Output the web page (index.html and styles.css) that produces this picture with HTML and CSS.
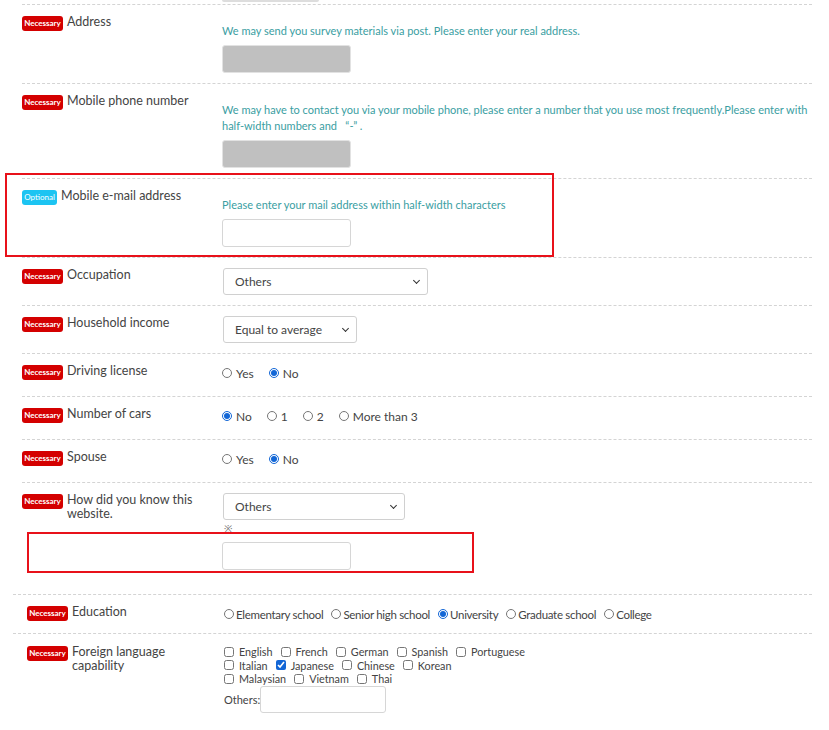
FILE: index.html
```html
<!DOCTYPE html>
<html lang="en">
<head>
    <meta charset="UTF-8">
    <meta name="viewport" content="width=device-width, initial-scale=1.0">
    <title>Member profile</title>
    <link rel="stylesheet" href="styles.css">
</head>
<body>
<div class="page">
    <div class="prev-input"></div>

    <div class="form">
        <div class="row">
            <div class="head"><span class="badge">Necessary</span><span class="name">Address</span></div>
            <div class="field">
                <p class="help">We may send you survey materials via post. Please enter your real address.</p>
                <input class="text masked" type="text">
            </div>
        </div>

        <div class="row">
            <div class="head"><span class="badge">Necessary</span><span class="name">Mobile phone number</span></div>
            <div class="field">
                <p class="help">We may have to contact you via your mobile phone, please enter a number that you use most frequently.Please enter with half-width numbers and &nbsp;&nbsp;“-” .</p>
                <input class="text masked" type="text">
            </div>
        </div>

        <div class="row">
            <div class="head"><span class="badge optional">Optional</span><span class="name">Mobile e-mail address</span></div>
            <div class="field">
                <p class="help">Please enter your mail address within half-width characters</p>
                <input class="text" type="text">
            </div>
        </div>

        <div class="row">
            <div class="head"><span class="badge">Necessary</span><span class="name">Occupation</span></div>
            <div class="field">
                <div class="select wide">
                    <select><option>Others</option></select>
                </div>
            </div>
        </div>

        <div class="row">
            <div class="head"><span class="badge">Necessary</span><span class="name">Household income</span></div>
            <div class="field">
                <div class="select mid">
                    <select><option>Equal to average</option></select>
                </div>
            </div>
        </div>

        <div class="row">
            <div class="head"><span class="badge">Necessary</span><span class="name">Driving license</span></div>
            <div class="field choices">
                <label><input type="radio" name="license">Yes</label>
                <label><input type="radio" name="license" checked>No</label>
            </div>
        </div>

        <div class="row">
            <div class="head"><span class="badge">Necessary</span><span class="name">Number of cars</span></div>
            <div class="field choices">
                <label><input type="radio" name="cars" checked>No</label>
                <label><input type="radio" name="cars">1</label>
                <label><input type="radio" name="cars">2</label>
                <label><input type="radio" name="cars">More than 3</label>
            </div>
        </div>

        <div class="row">
            <div class="head"><span class="badge">Necessary</span><span class="name">Spouse</span></div>
            <div class="field choices">
                <label><input type="radio" name="spouse">Yes</label>
                <label><input type="radio" name="spouse" checked>No</label>
            </div>
        </div>

        <div class="row">
            <div class="head"><span class="badge">Necessary</span><span class="name">How did you know this website.</span></div>
            <div class="field">
                <div class="select known">
                    <select><option>Others</option></select>
                </div>
                <div class="note">※</div>
                <input class="text" type="text">
            </div>
        </div>
    </div>

    <div class="form lower">
        <div class="row">
            <div class="head"><span class="badge">Necessary</span><span class="name">Education</span></div>
            <div class="field choices tight">
                <label><input type="radio" name="edu">Elementary school</label>
                <label><input type="radio" name="edu">Senior high school</label>
                <label><input type="radio" name="edu" checked>University</label>
                <label><input type="radio" name="edu">Graduate school</label>
                <label><input type="radio" name="edu">College</label>
            </div>
        </div>

        <div class="row last">
            <div class="head"><span class="badge">Necessary</span><span class="name">Foreign language capability</span></div>
            <div class="field">
                <div class="checks">
                    <label><input type="checkbox">English</label>
                    <label><input type="checkbox">French</label>
                    <label><input type="checkbox">German</label>
                    <label><input type="checkbox">Spanish</label>
                    <label><input type="checkbox">Portuguese</label>
                </div>
                <div class="checks">
                    <label><input type="checkbox">Italian</label>
                    <label><input type="checkbox" checked>Japanese</label>
                    <label><input type="checkbox">Chinese</label>
                    <label><input type="checkbox">Korean</label>
                </div>
                <div class="checks">
                    <label><input type="checkbox">Malaysian</label>
                    <label><input type="checkbox">Vietnam</label>
                    <label><input type="checkbox">Thai</label>
                </div>
                <div class="others">
                    <span>Others:</span><input class="text" type="text">
                </div>
            </div>
        </div>
    </div>

    <!-- red annotation frames from the screenshot -->
    <div class="mark mark-mail"></div>
    <div class="mark mark-known"></div>
</div>
</body>
</html>
```

FILE: styles.css
```css
* {
    margin: 0;
    padding: 0;
    box-sizing: border-box;
}

body {
    font-family: Lato, "Noto Sans", sans-serif;
    font-size: 12px;
    color: #444;
    background-color: #fff;
}

.page {
    position: relative;
    height: 730px;
    overflow: hidden;
}

.prev-input {
    width: 97px;
    height: 2px;
    margin-left: 222px;
    background-color: #ddd;
    border-radius: 0 0 2px 2px;
}

.form {
    margin: 2px 0 0 22px;
    width: 790px;
}

.row {
    display: flex;
    border-top: 1px dashed #d4d4d4;
    padding: 10px 0 10px;
}

.head {
    width: 200px;
    flex-shrink: 0;
    display: flex;
    align-items: flex-start;
    gap: 4px;
}

.badge {
    display: inline-block;
    flex-shrink: 0;
    width: 41px;
    height: 15px;
    margin-top: 1px;
    line-height: 15px;
    text-align: center;
    font-size: 8px;
    font-weight: bold;
    color: #fff;
    background-color: #d40000;
    border-radius: 3px;
}

.badge.optional {
    width: 35px;
    font-weight: normal;
    background-color: #1cc4f2;
}

.name {
    max-width: 126px;
    font-size: 12.5px;
    line-height: 14px;
}

.field {
    flex: 1;
}

.help {
    margin-top: 8px;
    font-size: 11px;
    line-height: 16px;
    color: #3a9ea2;
}

.text {
    display: block;
    width: 129px;
    height: 28px;
    margin-top: 6px;
    border: 1px solid #d6d6d6;
    border-radius: 3px;
    background-color: #fff;
}

.text.masked {
    background-color: #c0c0c0;
    border-color: #e2e2e2;
}

.select {
    position: relative;
    height: 27px;
    margin-left: 1px;
}

.select select {
    appearance: none;
    width: 100%;
    height: 100%;
    padding-left: 11px;
    font-family: inherit;
    font-size: 12px;
    color: #444;
    background-color: #fff;
    border: 1px solid #d0d0d0;
    border-radius: 3px;
}

.select::after {
    content: "";
    position: absolute;
    right: 9px;
    top: 10px;
    width: 4px;
    height: 4px;
    border-right: 1.5px solid #333;
    border-bottom: 1.5px solid #333;
    transform: rotate(45deg);
}

.select.wide {
    width: 205px;
}

.select.mid {
    width: 134px;
}

.select.known {
    width: 182px;
}

.note {
    margin-top: 3px;
    font-size: 10px;
    line-height: 12px;
    color: #777;
    padding-left: 2px;
}

.note + .text {
    margin-top: 7px;
}

.choices {
    display: flex;
    align-items: center;
    gap: 15px;
    height: 14px;
    margin-top: 2px;
    padding-bottom: 6px;
    box-sizing: content-box;
}

.choices label,
.checks label {
    display: flex;
    align-items: center;
    gap: 4px;
}

input[type="radio"],
input[type="checkbox"] {
    width: 10px;
    height: 10px;
    margin: 0;
    accent-color: #1266d6;
}

.lower {
    margin: 14px 0 0 13px;
    width: 799px;
}

.lower .row {
    padding-left: 14px;
}

.lower .head {
    width: 197px;
}

.choices.tight {
    gap: 8px;
    font-size: 11.5px;
    letter-spacing: -0.3px;
    height: 14px;
    margin-top: 2px;
    padding-bottom: 2px;
}

.choices.tight label {
    gap: 2px;
}

.row.last {
    padding-top: 11px;
}

.checks {
    display: flex;
    gap: 8px;
    font-size: 10.8px;
    line-height: 13.5px;
}

.checks label {
    gap: 5px;
}

.others {
    display: flex;
    align-items: flex-start;
    font-size: 11px;
}

.others span {
    margin-top: 7px;
}

.others .text {
    width: 126px;
    height: 27px;
    margin-top: 0;
}

.mark {
    position: absolute;
    border: 2px solid #e8111a;
}

.mark-mail {
    left: 5px;
    top: 173px;
    width: 549px;
    height: 84px;
}

.mark-known {
    left: 27px;
    top: 532px;
    width: 447px;
    height: 41px;
}
```
